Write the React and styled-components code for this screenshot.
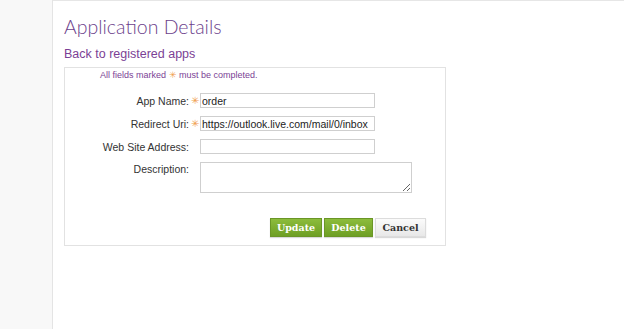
import React from 'react'
import styled, { createGlobalStyle } from 'styled-components'

const Global = createGlobalStyle`
  html, body { margin: 0; padding: 0; background: #fff; }
  body { font-family: "Liberation Sans", Arial, sans-serif; }
`

const Page = styled.div`
  display: flex;
  width: 624px;
  height: 329px;
  overflow: hidden;
`

const SideStrip = styled.div`
  width: 52px;
  flex: none;
  background: #f8f8f8;
  border-right: 1px solid #e4e4e4;
`

const Main = styled.div`
  flex: 1;
  border-top: 1px solid #e6e6e6;
  padding: 13px 0 0 11px;
`

const Title = styled.h1`
  margin: 0;
  font-family: Lato, sans-serif;
  font-weight: 300;
  font-size: 19.5px;
  line-height: 26px;
  color: #6c3f8c;
`

const BackLink = styled.a`
  display: block;
  margin-top: 7px;
  font-size: 12.5px;
  line-height: 14px;
  color: #7b3f95;
  text-decoration: none;
`

const Box = styled.div`
  margin-top: 6px;
  width: 382px;
  height: 179px;
  border: 1px solid #e2e2e2;
  box-sizing: border-box;
  padding: 1px 0 0 35px;
`

const Note = styled.div`
  font-size: 9px;
  line-height: 12px;
  color: #7b3f95;
`

const Star = styled.span`
  color: #f0a050;
  font-size: 9px;
`

const Form = styled.div`
  margin-top: 12px;
  display: grid;
  grid-template-columns: 89px 11px auto;
  row-gap: 8px;
  align-items: center;
`

const Label = styled.label`
  text-align: right;
  white-space: nowrap;
  font-size: 10.5px;
  color: #333;
  align-self: ${p => (p.$top ? 'start' : 'center')};
  padding-top: ${p => (p.$top ? '1px' : '0')};
`

const StarCell = styled.span`
  text-align: center;
  padding-left: 1px;
  color: #f0a050;
  font-size: 10px;
  line-height: 10px;
`

const Input = styled.input`
  width: 175px;
  height: 15px;
  box-sizing: border-box;
  border: 1px solid #cfcfcf;
  padding: 0 1px;
  font-family: "Liberation Sans", Arial, sans-serif;
  font-size: 10.5px;
  color: #222;
  outline: none;
`

const TextArea = styled.textarea`
  width: 212px;
  height: 31px;
  box-sizing: border-box;
  border: 1px solid #cfcfcf;
  resize: both;
  outline: none;
`

const Actions = styled.div`
  display: flex;
  gap: 2px;
  margin: 25px 0 0 170px;
`

const Button = styled.button`
  height: 19px;
  width: ${p => p.$w}px;
  border: 1px solid ${p => (p.$green ? '#6a9626' : '#dcdcdc')};
  background: ${p =>
    p.$green
      ? 'linear-gradient(#8cbc3c, #6e9f24)'
      : 'linear-gradient(#fbfbfb, #e8e8e8)'};
  color: ${p => (p.$green ? '#fff' : '#333')};
  font-family: "DejaVu Serif", serif;
  font-weight: bold;
  font-size: 9.5px;
  padding: 0;
  box-shadow: 0 1px 1px rgba(0,0,0,0.15);
`

export default function App() {
  return (
    <Page>
      <Global />
      <SideStrip />
      <Main>
        <Title>Application Details</Title>
        <BackLink href="#">Back to registered apps</BackLink>
        <Box>
          <Note>
            All fields marked <Star>✳</Star> must be completed.
          </Note>
          <Form>
            <Label>App Name:</Label>
            <StarCell>✳</StarCell>
            <Input defaultValue="order" />
            <Label>Redirect Uri:</Label>
            <StarCell>✳</StarCell>
            <Input defaultValue="https://outlook.live.com/mail/0/inbox" />
            <Label>Web Site Address:</Label>
            <span />
            <Input />
            <Label $top>Description:</Label>
            <span />
            <TextArea />
          </Form>
          <Actions>
            <Button $green $w={52}>Update</Button>
            <Button $green $w={49}>Delete</Button>
            <Button $w={51}>Cancel</Button>
          </Actions>
        </Box>
      </Main>
    </Page>
  )
}
